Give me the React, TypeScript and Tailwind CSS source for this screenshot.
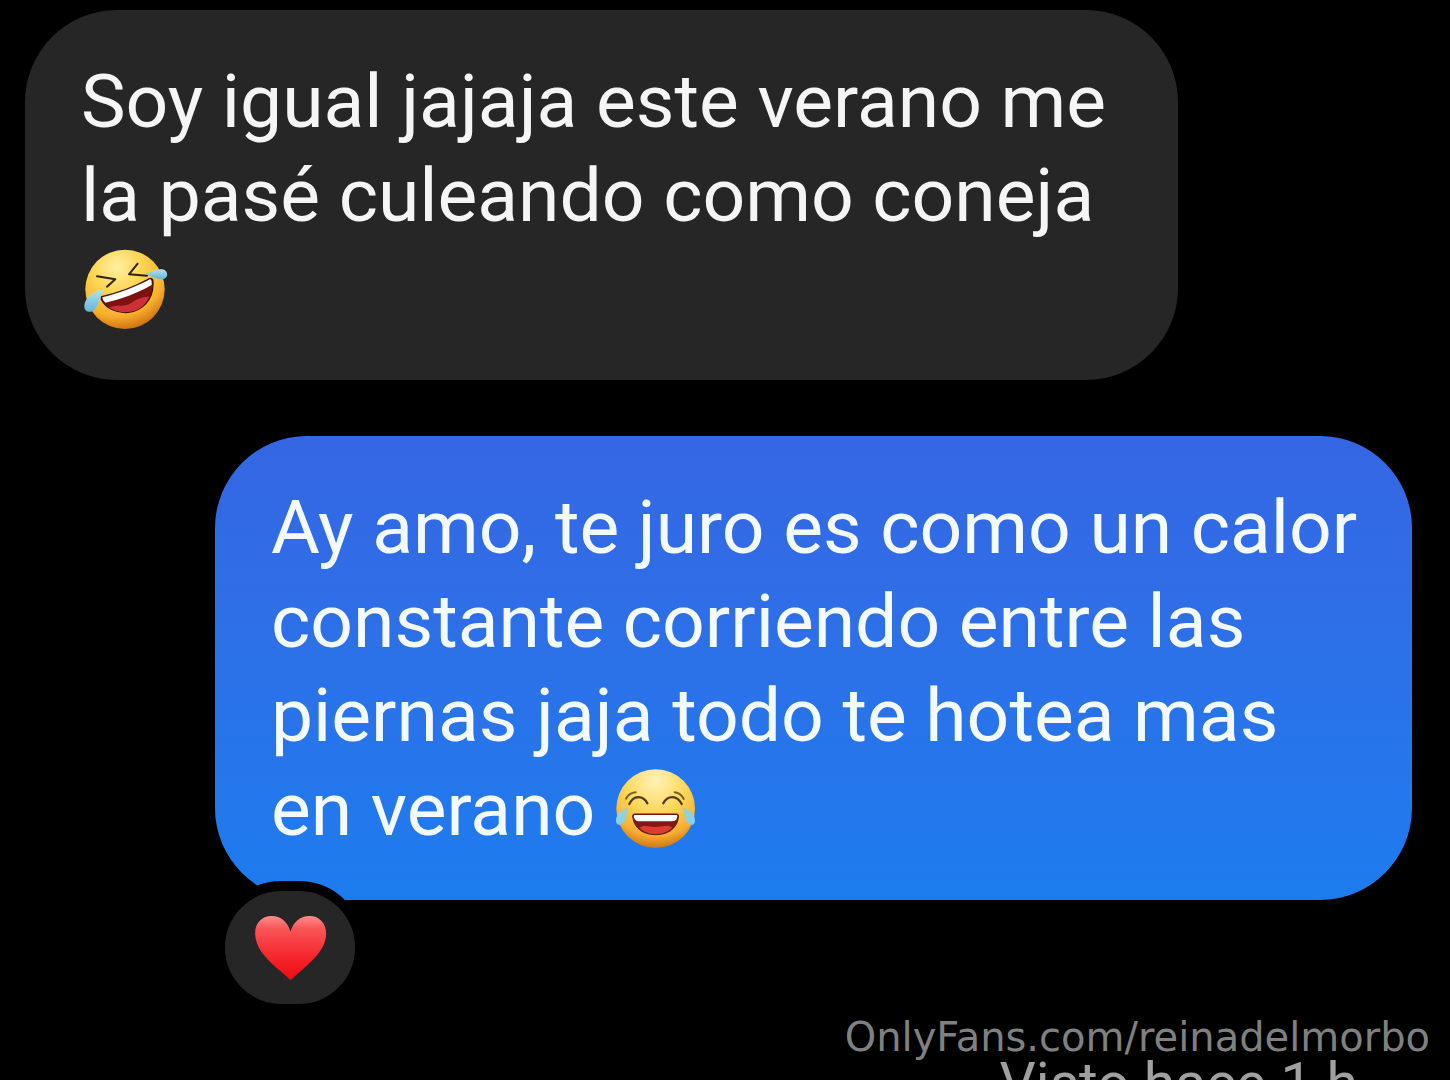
import type { ReactNode } from 'react'

const RollingEmoji = () => (
  <svg
    viewBox="42 38 264 252"
    className="inline-block ml-0.5 w-[88px] h-[84px] align-[-17px]"
    role="img"
    aria-label="Muerto de risa"
  >
    <defs>
      <radialGradient id="rollFace" cx="0.4" cy="0.22" r="0.82">
        <stop offset="0" stopColor="#fff0a0" />
        <stop offset="0.4" stopColor="#fcd450" />
        <stop offset="0.75" stopColor="#f9b02c" />
        <stop offset="1" stopColor="#c9690f" />
      </radialGradient>
      <linearGradient id="rollTear" x1="0" y1="0" x2="0" y2="1">
        <stop offset="0" stopColor="#b5e2ea" />
        <stop offset="1" stopColor="#62b5dc" />
      </linearGradient>
    </defs>
    <circle cx="168" cy="162" r="119" fill="url(#rollFace)" />
    <path
      d="M84 123 L139 132 L114 154"
      fill="none"
      stroke="#33240c"
      strokeWidth="6"
      strokeLinecap="round"
      strokeLinejoin="round"
    />
    <path
      d="M206 85 L180 117 L234 121"
      fill="none"
      stroke="#33240c"
      strokeWidth="6"
      strokeLinecap="round"
      strokeLinejoin="round"
    />
    <path
      d="M98 184 C145 174 198 154 242 130 C251 127 253 135 252 147 C252 194 220 226 178 231 C144 234 111 220 97 192 Z"
      fill="#7d1210"
      stroke="#3c1608"
      strokeWidth="4"
    />
    <path
      d="M120 216 C147 207 166 216 188 202 C208 187 225 184 241 184 C229 211 207 228 177 230 C154 232 134 227 120 216 Z"
      fill="#cf3037"
    />
    <path
      d="M100 186 C150 175 203 153 243 132 Q249 132 248 149 C205 173 155 193 109 202 Q101 197 100 186 Z"
      fill="#fff"
    />
    <path
      d="M107 162 C75 166 49 184 46 211 C45 230 65 236 78 221 C94 203 89 184 107 162 Z"
      fill="url(#rollTear)"
    />
    <path
      d="M222 114 C242 117 257 98 281 102 C299 106 300 130 280 132 C258 133 246 120 222 114 Z"
      fill="url(#rollTear)"
    />
  </svg>
)

const JoyEmoji = () => (
  <svg
    viewBox="48 40 252 255"
    className="inline-block w-[84px] h-[85px] align-[-17px]"
    role="img"
    aria-label="Llorando de risa"
  >
    <defs>
      <radialGradient id="joyFace" cx="0.5" cy="0.14" r="0.88">
        <stop offset="0" stopColor="#fff3b8" />
        <stop offset="0.45" stopColor="#fcd75a" />
        <stop offset="0.8" stopColor="#f8ad30" />
        <stop offset="1" stopColor="#c9700f" />
      </radialGradient>
      <linearGradient id="joyTear" x1="0" y1="0" x2="0" y2="1">
        <stop offset="0" stopColor="#9ed3c4" />
        <stop offset="1" stopColor="#83cff0" />
      </linearGradient>
    </defs>
    <circle cx="173" cy="165" r="118" fill="url(#joyFace)" />
    <path
      d="M94 151 C107 124 135 124 148 149 M196 149 C209 124 237 124 251 151"
      fill="none"
      stroke="#54391a"
      strokeWidth="7"
      strokeLinecap="round"
    />
    <path
      d="M84 135 Q93 118 113 116 M230 116 Q249 119 257 136"
      fill="none"
      stroke="#80601f"
      strokeWidth="6"
      strokeLinecap="round"
    />
    <path
      d="M107 181 H238 Q244 184 241 194 C235 226 209 243 173 243 C137 243 111 226 105 194 Q102 184 107 181 Z"
      fill="#861713"
      stroke="#4d2110"
      strokeWidth="3"
    />
    <path d="M124 222 C143 210 161 223 174 219 C191 222 207 210 223 222 Q202 241 173 241 Q144 241 124 222 Z" fill="#dc3b32" />
    <path d="M110 184 H236 Q240 185 237 193 Q234 203 222 203 H125 Q112 203 108 192 Q106 185 110 184 Z" fill="#fff" />
    <path
      d="M91 160 C67 168 50 187 55 207 C61 219 77 213 82 199 C87 185 85 174 91 160 Z"
      fill="url(#joyTear)"
    />
    <path
      d="M254 160 C278 168 295 187 290 207 C284 219 268 213 263 199 C258 185 260 174 254 160 Z"
      fill="url(#joyTear)"
    />
  </svg>
)

const Heart = () => (
  <svg viewBox="145 168 216 196" className="w-[73px] h-[66px]" aria-hidden="true">
    <defs>
      <linearGradient id="heart" x1="0" y1="0" x2="0" y2="1">
        <stop offset="0" stopColor="#ff8d8a" />
        <stop offset="0.2" stopColor="#fa5558" />
        <stop offset="0.65" stopColor="#f5252b" />
        <stop offset="1" stopColor="#ed0c13" />
      </linearGradient>
    </defs>
    <path
      d="M253 217 C244 187 223 171 198 171 C166 171 147 194 148 224 C149 263 175 293 213 326 C228 338 241 350 249 358 Q253 362 257 358 C266 349 279 338 293 326 C332 293 358 262 359 224 C359 194 340 171 309 171 C283 171 262 187 253 217 Z"
      fill="url(#heart)"
    />
  </svg>
)

const Message = ({ className, children }: { className: string; children: ReactNode }) => (
  <div className={`rounded-[92px] py-11 pl-14 whitespace-nowrap ${className}`}>
    <p className="text-[75px] leading-[94px] font-[450]">{children}</p>
  </div>
)

export default function App() {
  return (
    <main className="h-screen overflow-hidden bg-black pt-2.5 pl-[25px] pr-[38px] font-['Roboto',sans-serif] relative">
      <div className="flex flex-col gap-14">
        <Message className="self-start w-[calc(100%-234px)] bg-[#262626] text-[#f5f5f5]">
          Soy igual jajaja este verano me
          <br />
          la pasé culeando como coneja
          <br />
          <RollingEmoji />
        </Message>

        <div className="relative self-end w-[calc(100%-190px)]">
          <Message className="bg-linear-to-b from-[#3566e3] to-[#1c7cee] text-[#f4fbff]">
            Ay amo, te juro es como un calor
            <br />
            constante corriendo entre las
            <br />
            piernas jaja todo te hotea mas
            <br />
            en verano <JoyEmoji />
          </Message>
          <button
            type="button"
            aria-label="Me encanta"
            className="absolute left-0 -bottom-[114px] w-[150px] h-[133px] flex items-center justify-center rounded-full border-10 border-black bg-[#262626]"
          >
            <Heart />
          </button>
        </div>
      </div>

      <p className="mt-[148px] pr-[54px] text-right text-[57px] leading-[72px] text-[#a0a0a0]">
        Visto hace 1 h
      </p>

      <a
        href="#"
        className="absolute bottom-5 right-5 text-[40px] leading-[46px] text-[#808080] font-['DejaVu_Sans',sans-serif]"
      >
        OnlyFans.com/reinadelmorbo
      </a>
    </main>
  )
}
